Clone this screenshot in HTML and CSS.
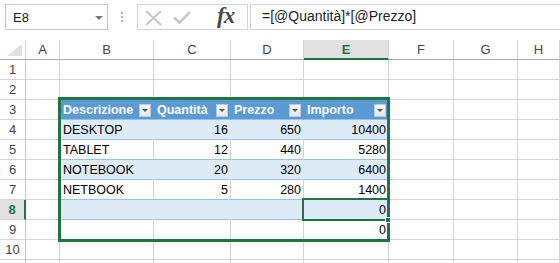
FILE: index.html
```html
<!DOCTYPE html>
<html lang="it">
<head>
    <meta charset="UTF-8">
    <meta name="viewport" content="width=device-width, initial-scale=1.0">
    <title>Foglio1</title>
    <link rel="stylesheet" href="styles.css">
</head>
<body>
    <div class="toolbar">
        <div class="namebox"><span>E8</span><span class="caret"></span></div>
        <div class="grip"><i></i><i></i><i></i></div>
        <div class="fbuttons">
            <svg class="icon-x" width="17" height="16" viewBox="0 0 17 16">
                <path d="M1 1 L16 15 M16 1 L1 15" stroke="#c8c8c8" stroke-width="2" fill="none"/>
            </svg>
            <svg class="icon-ok" width="18" height="13" viewBox="0 0 18 13">
                <path d="M1 6.5 L6.5 11.5 L17 1" stroke="#c8c8c8" stroke-width="2.6" fill="none"/>
            </svg>
            <span class="fx">fx</span>
        </div>
        <div class="formula">=[@Quantità]*[@Prezzo]</div>
    </div>

    <div class="sheet">
        <div class="corner"></div>
        <div class="ch">A</div><div class="ch">B</div><div class="ch">C</div><div class="ch">D</div>
        <div class="ch sel">E</div><div class="ch">F</div><div class="ch">G</div><div class="ch">H</div>

        <div class="rh">1</div>
        <div class="c"></div><div class="c"></div><div class="c"></div><div class="c"></div>
        <div class="c"></div><div class="c"></div><div class="c"></div><div class="c"></div>

        <div class="rh">2</div>
        <div class="c"></div><div class="c"></div><div class="c"></div><div class="c"></div>
        <div class="c"></div><div class="c"></div><div class="c"></div><div class="c"></div>

        <div class="rh">3</div>
        <div class="c"></div>
        <div class="c th"><span>Descrizione</span><b class="filter"></b></div>
        <div class="c th"><span>Quantità</span><b class="filter"></b></div>
        <div class="c th"><span>Prezzo</span><b class="filter"></b></div>
        <div class="c th"><span>Importo</span><b class="filter"></b></div>
        <div class="c"></div><div class="c"></div><div class="c"></div>

        <div class="rh">4</div>
        <div class="c"></div>
        <div class="c band">DESKTOP</div><div class="c band num">16</div>
        <div class="c band num">650</div><div class="c band num">10400</div>
        <div class="c"></div><div class="c"></div><div class="c"></div>

        <div class="rh">5</div>
        <div class="c"></div>
        <div class="c plain">TABLET</div><div class="c plain num">12</div>
        <div class="c plain num">440</div><div class="c plain num">5280</div>
        <div class="c"></div><div class="c"></div><div class="c"></div>

        <div class="rh">6</div>
        <div class="c"></div>
        <div class="c band">NOTEBOOK</div><div class="c band num">20</div>
        <div class="c band num">320</div><div class="c band num">6400</div>
        <div class="c"></div><div class="c"></div><div class="c"></div>

        <div class="rh">7</div>
        <div class="c"></div>
        <div class="c plain">NETBOOK</div><div class="c plain num">5</div>
        <div class="c plain num">280</div><div class="c plain num">1400</div>
        <div class="c"></div><div class="c"></div><div class="c"></div>

        <div class="rh sel">8</div>
        <div class="c"></div>
        <div class="c band"></div><div class="c band"></div>
        <div class="c band gap"></div><div class="c band num">0</div>
        <div class="c"></div><div class="c"></div><div class="c"></div>

        <div class="rh">9</div>
        <div class="c"></div>
        <div class="c plain"></div><div class="c plain"></div>
        <div class="c plain"></div><div class="c plain num">0</div>
        <div class="c"></div><div class="c"></div><div class="c"></div>

        <div class="rh">10</div>
        <div class="c"></div><div class="c"></div><div class="c"></div><div class="c"></div>
        <div class="c"></div><div class="c"></div><div class="c"></div><div class="c"></div>

        <!-- next row, only its top edge shows -->
        <div class="rh"></div>
        <div class="c"></div><div class="c"></div><div class="c"></div><div class="c"></div>
        <div class="c"></div><div class="c"></div><div class="c"></div><div class="c"></div>

        <!-- selection overlays -->
        <div class="table-outline"></div>
        <div class="active-cell"></div>
        <div class="fill-handle"></div>
    </div>
</body>
</html>
```

FILE: styles.css
```css
* {
    box-sizing: border-box;
}
body {
    margin: 0;
    width: 560px;
    height: 263px;
    overflow: hidden;
    background-color: white;
    font-family: "Liberation Sans", Arial, sans-serif;
    color: #000;
}

/* formula bar */
.toolbar {
    display: flex;
    align-items: flex-start;
    height: 40px;
    padding-top: 4px;
}
.namebox {
    display: flex;
    align-items: center;
    justify-content: space-between;
    width: 103px;
    height: 26px;
    margin-left: 5px;
    padding: 0 4px 0 7px;
    border: 1px solid #c6c6c6;
    font-size: 13px;
    color: #222;
}
.caret {
    width: 0;
    height: 0;
    border-left: 4px solid transparent;
    border-right: 4px solid transparent;
    border-top: 4px solid #777;
    margin-top: 1px;
}
.grip {
    display: flex;
    flex-direction: column;
    gap: 2px;
    width: 29px;
    padding: 8px 0 0 13px;
}
.grip i {
    width: 2px;
    height: 2px;
    background-color: #b4b4b4;
}
.fbuttons {
    display: flex;
    align-items: center;
    width: 111px;
    height: 26px;
    border: 1px solid #d4d4d4;
    padding-left: 7px;
}
.icon-x {
    margin-top: 1px;
}
.icon-ok {
    margin-left: 11px;
    margin-top: 1px;
}
.fx {
    margin-left: 26px;
    font-family: "Liberation Serif", "Times New Roman", serif;
    font-style: italic;
    font-weight: bold;
    font-size: 23px;
    line-height: 24px;
    color: #4a4a4a;
    letter-spacing: -1px;
    margin-top: -2px;
}
.formula {
    flex: 1;
    height: 26px;
    margin-left: 2px;
    margin-right: -2px;
    padding-left: 11px;
    border: 1px solid #d4d4d4;
    font-size: 14px;
    line-height: 23px;
    color: #222;
}

/* grid */
.sheet {
    position: relative;
    display: grid;
    grid-template-columns: 26px 34px 94px 77px 73px 85px 65px 64px 42px;
    grid-auto-rows: 20px;
}
.corner {
    display: flex;
    justify-content: flex-end;
    align-items: flex-end;
    padding: 0 3px 3px 0;
    border-right: 1px solid #d4d4d4;
    border-bottom: 1px solid #ababab;
}
.corner::after {
    content: "";
    width: 0;
    height: 0;
    border-left: 15px solid transparent;
    border-bottom: 12px solid #dfdfdf;
}
.ch {
    border-right: 1px solid #d4d4d4;
    border-bottom: 1px solid #ababab;
    text-align: center;
    font-size: 13px;
    line-height: 19px;
    color: #444;
}
.ch.sel {
    background-color: #e1e1e1;
    border-bottom: 2px solid #217346;
    color: #217346;
    font-weight: bold;
}
.rh {
    border-right: 1px solid #c6c6c6;
    border-bottom: 1px solid #d4d4d4;
    text-align: center;
    font-size: 13px;
    line-height: 20px;
    color: #444;
}
.rh.sel {
    background-color: #e1e1e1;
    border-right: 2px solid #217346;
    color: #217346;
    font-weight: bold;
}
.c {
    border-right: 1px solid #d4d4d4;
    border-bottom: 1px solid #d4d4d4;
    padding: 1px 2px 0 3px;
    font-size: 12.5px;
    line-height: 18px;
    white-space: nowrap;
    overflow: hidden;
}
.num {
    text-align: right;
}

/* table style */
.th {
    display: flex;
    align-items: center;
    justify-content: space-between;
    padding-top: 0;
    background-color: #5b9bd5;
    border-right-color: #5b9bd5;
    border-bottom-color: #9bc2e6;
    color: white;
    font-weight: bold;
}
.filter {
    display: flex;
    align-items: center;
    justify-content: center;
    flex: none;
    width: 12px;
    height: 13px;
    margin-top: 1px;
    background: linear-gradient(#fdfdfd, #e6e6e6);
    border: 1px solid #b9c9da;
}
.filter::after {
    content: "";
    width: 0;
    height: 0;
    border-left: 3px solid transparent;
    border-right: 3px solid transparent;
    border-top: 3px solid #555;
}
.band {
    background-color: #ddebf7;
    border-right-color: #ddebf7;
    border-bottom-color: #9bc2e6;
}
.plain {
    border-bottom-color: #9bc2e6;
}
.band.gap {
    border-right-color: #d4d4d4;
}

/* overlays */
.table-outline {
    position: absolute;
    left: 58px;
    top: 57px;
    width: 332px;
    height: 145px;
    border: 3px solid #217346;
}
.active-cell {
    position: absolute;
    left: 302px;
    top: 158px;
    width: 87px;
    height: 23px;
    border: 2px solid #217346;
}
.fill-handle {
    position: absolute;
    left: 385px;
    top: 177px;
    width: 6px;
    height: 6px;
    background-color: #217346;
    border: 1px solid white;
}
```
